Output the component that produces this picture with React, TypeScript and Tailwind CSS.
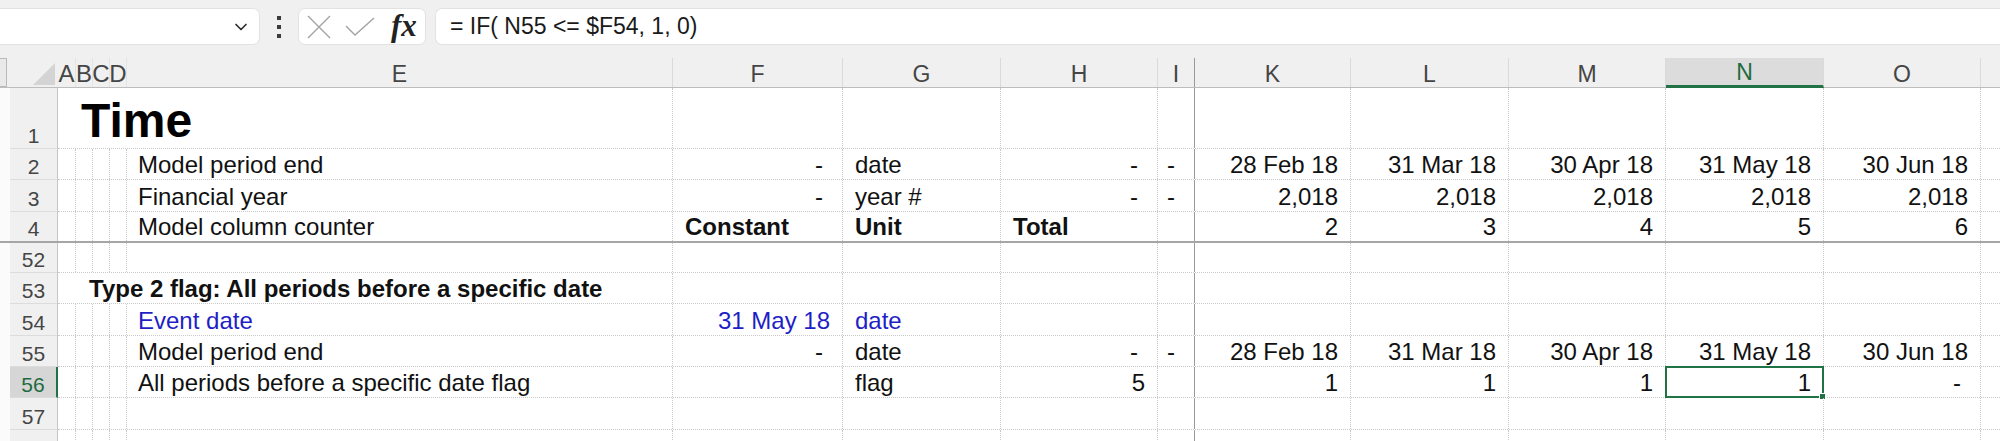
import React from 'react';
import { ChevronDown } from 'lucide-react';

type Val = { t: string; a?: 'l' | 'r' | 'd'; b?: boolean; blue?: boolean };
type RowDef = {
  n: string;
  h: string;
  title?: { t: string; big?: boolean };
  e?: Val;
  cells?: Record<string, Val>;
  frozen?: boolean;
  active?: boolean;
};

const SMALL = [
  { k: 'A', w: 'w-[18px]' },
  { k: 'B', w: 'w-[17px]' },
  { k: 'C', w: 'w-[17px]' },
  { k: 'D', w: 'w-[17px]' },
];

const COLS = [
  { k: 'F', w: 'w-[170px]' },
  { k: 'G', w: 'w-[158px]' },
  { k: 'H', w: 'w-[157px]' },
  { k: 'I', w: 'w-[37px]' },
  { k: 'K', w: 'w-[156px]' },
  { k: 'L', w: 'w-[158px]' },
  { k: 'M', w: 'w-[157px]' },
  { k: 'N', w: 'w-[158px]' },
  { k: 'O', w: 'w-[157px]' },
];

const dates = (): Record<string, Val> => ({
  K: { t: '28 Feb 18' },
  L: { t: '31 Mar 18' },
  M: { t: '30 Apr 18' },
  N: { t: '31 May 18' },
  O: { t: '30 Jun 18' },
});

const ROWS: RowDef[] = [
  { n: '1', h: 'h-[61px]', title: { t: 'Time', big: true } },
  {
    n: '2',
    h: 'h-[31px]',
    e: { t: 'Model period end' },
    cells: { F: { t: '-', a: 'd' }, G: { t: 'date', a: 'l' }, H: { t: '-', a: 'd' }, I: { t: '-', a: 'd' }, ...dates() },
  },
  {
    n: '3',
    h: 'h-[32px]',
    e: { t: 'Financial year' },
    cells: {
      F: { t: '-', a: 'd' },
      G: { t: 'year #', a: 'l' },
      H: { t: '-', a: 'd' },
      I: { t: '-', a: 'd' },
      K: { t: '2,018' },
      L: { t: '2,018' },
      M: { t: '2,018' },
      N: { t: '2,018' },
      O: { t: '2,018' },
    },
  },
  {
    n: '4',
    h: 'h-[31px]',
    frozen: true,
    e: { t: 'Model column counter' },
    cells: {
      F: { t: 'Constant', a: 'l', b: true },
      G: { t: 'Unit', a: 'l', b: true },
      H: { t: 'Total', a: 'l', b: true },
      K: { t: '2' },
      L: { t: '3' },
      M: { t: '4' },
      N: { t: '5' },
      O: { t: '6' },
    },
  },
  { n: '52', h: 'h-[30px]' },
  { n: '53', h: 'h-[31px]', title: { t: 'Type 2 flag: All periods before a specific date' } },
  {
    n: '54',
    h: 'h-[32px]',
    e: { t: 'Event date', blue: true },
    cells: { F: { t: '31 May 18', blue: true }, G: { t: 'date', a: 'l', blue: true } },
  },
  {
    n: '55',
    h: 'h-[31px]',
    e: { t: 'Model period end' },
    cells: { F: { t: '-', a: 'd' }, G: { t: 'date', a: 'l' }, H: { t: '-', a: 'd' }, I: { t: '-', a: 'd' }, ...dates() },
  },
  {
    n: '56',
    h: 'h-[31px]',
    active: true,
    e: { t: 'All periods before a specific date flag' },
    cells: {
      G: { t: 'flag', a: 'l' },
      H: { t: '5' },
      K: { t: '1' },
      L: { t: '1' },
      M: { t: '1' },
      N: { t: '1' },
      O: { t: '-', a: 'd' },
    },
  },
  { n: '57', h: 'h-[32px]' },
  { n: '58', h: 'h-[31px]' },
];

function CellText({ v }: { v?: Val }) {
  if (!v) return null;
  return (
    <span
      className={`leading-[24px] pb-[2px] whitespace-nowrap ${v.b ? 'font-bold' : ''} ${
        v.blue ? 'text-[#1f1fc6]' : 'text-[#111]'
      }`}
    >
      {v.t}
    </span>
  );
}

function alignCls(v?: Val) {
  if (!v) return '';
  if (v.a === 'l') return 'justify-start pl-[12px]';
  if (v.a === 'd') return 'justify-end pr-[19px]';
  return 'justify-end pr-[12px]';
}

function GridRow({ r }: { r: RowDef }) {
  const bottom = r.frozen ? '' : 'border-b border-dotted border-[#c9c9c9]';
  return (
    <div className={`flex ${r.h} shrink-0 ${r.frozen ? 'border-b-2 border-[#a6a6a6]' : ''}`}>
      <div className="w-[10px] shrink-0 bg-[#fbfbfb]" />
      <div
        className={`w-[48px] shrink-0 flex items-end justify-center border-r ${
          r.frozen ? '' : 'border-b border-b-[#dcdcdc]'
        } ${
          r.active
            ? 'bg-[#d6d6d6] text-[#1e6b41] border-r-2 border-r-[#217346]'
            : 'bg-[#f0f0f0] text-[#454545] border-r-[#c6c6c6]'
        }`}
      >
        <span className="text-[21px] leading-[21px] pb-[2px]">{r.n}</span>
      </div>
      <div className={`flex flex-1 min-w-0 ${bottom}`}>
        {r.title ? (
          <div className="w-[615px] shrink-0 flex items-end border-r border-dotted border-[#c9c9c9]">
            {r.title.big ? (
              <span className="text-[48px] leading-[48px] font-bold pl-[23px] pb-[3px] text-black">{r.title.t}</span>
            ) : (
              <span className="text-[24px] leading-[24px] font-bold pl-[31px] pb-[2px] text-[#111] whitespace-nowrap">
                {r.title.t}
              </span>
            )}
          </div>
        ) : (
          <>
            {SMALL.map((c) => (
              <div key={c.k} className={`${c.w} shrink-0 border-r border-dotted border-[#c9c9c9]`} />
            ))}
            <div className="w-[546px] shrink-0 flex items-end pl-[11px] border-r border-dotted border-[#c9c9c9]">
              <CellText v={r.e} />
            </div>
          </>
        )}
        {COLS.map((c) => {
          const v = r.cells?.[c.k];
          const sel = r.active && c.k === 'N';
          return (
            <div
              key={c.k}
              className={`${c.w} shrink-0 relative flex items-end border-r ${
                c.k === 'I' ? 'border-solid border-[#9b9b9b]' : 'border-dotted border-[#c9c9c9]'
              } ${alignCls(v)}`}
            >
              <CellText v={v} />
              {sel && (
                <div className="absolute -left-[1px] -top-[1px] -right-[1px] -bottom-[1px] border-2 border-[#217346]">
                  <div className="absolute -right-[4px] -bottom-[4px] w-[7px] h-[7px] bg-[#217346] border border-white" />
                </div>
              )}
            </div>
          );
        })}
        <div className="flex-1" />
      </div>
    </div>
  );
}

export default function App() {
  return (
    <div className="w-[2000px] h-[441px] overflow-hidden bg-white font-['Liberation_Sans',Arial,sans-serif] text-[24px] flex flex-col">
      {/* formula bar */}
      <div className="h-[58px] shrink-0 bg-[#f0f0f0] flex items-start pt-[8px]">
        <div className="w-[260px] h-[37px] bg-white rounded-r-[7px] border border-l-0 border-[#e2e2e2] flex items-center justify-end pr-[8px]">
          <ChevronDown size={20} strokeWidth={2} className="text-[#2b2b2b]" />
        </div>
        <div className="w-[38px] h-[37px] flex flex-col items-center justify-center gap-[5px]">
          <div className="w-[4px] h-[4px] bg-[#3a3a3a]" />
          <div className="w-[4px] h-[4px] bg-[#3a3a3a]" />
          <div className="w-[4px] h-[4px] bg-[#3a3a3a]" />
        </div>
        <div className="w-[128px] h-[37px] bg-white rounded-[7px] border border-[#e2e2e2] flex items-center pl-[8px]">
          <svg width="24" height="24" viewBox="0 0 24 24" className="shrink-0">
            <path d="M1 1 L23 23 M23 1 L1 23" stroke="#a3a3a3" strokeWidth="1.4" fill="none" />
          </svg>
          <svg width="30" height="20" viewBox="0 0 30 20" className="ml-[14px] shrink-0">
            <path d="M1 9 L10 18 L29 1" stroke="#a3a3a3" strokeWidth="1.4" fill="none" />
          </svg>
          <span className="ml-[16px] font-['Liberation_Serif',serif] italic font-bold text-[31px] leading-none text-[#222] -mt-[2px]">
            fx
          </span>
        </div>
        <div className="ml-[9px] flex-1 h-[37px] bg-white rounded-l-[7px] border border-r-0 border-[#e2e2e2] flex items-center pl-[14px]">
          <span className="text-[23px] text-[#1a1a1a] whitespace-pre">= IF( N55 &lt;= $F54, 1, 0)</span>
        </div>
      </div>

      {/* column headers */}
      <div className="h-[30px] shrink-0 flex bg-[#f0f0f0] border-b border-[#bdbdbd]">
        <div className="w-[10px] shrink-0 flex">
          <div className="w-[7px] h-full bg-[#e9e9e9] border border-l-0 border-[#b9b9b9]" />
        </div>
        <div className="w-[48px] shrink-0 relative">
          <svg className="absolute left-[23px] top-[5px]" width="22" height="22" viewBox="0 0 22 22">
            <polygon points="22,0 22,22 0,22" fill="#d4d4d4" />
          </svg>
        </div>
        {SMALL.map((c) => (
          <div
            key={c.k}
            className={`${c.w} shrink-0 flex items-end justify-center text-[24px] leading-[24px] text-[#454545] pb-[1px] border-r border-[#e4e4e4]`}
          >
            <span className="whitespace-nowrap">{c.k}</span>
          </div>
        ))}
        <div className="w-[546px] shrink-0 flex items-end justify-center border-r border-[#dadada] text-[23px] leading-[23px] text-[#454545] pb-[1px]">
          E
        </div>
        {COLS.map((c) => (
          <div
            key={c.k}
            className={`${c.w} shrink-0 flex items-end justify-center text-[23px] leading-[23px] pb-[1px] border-r ${
              c.k === 'I' ? 'border-[#9b9b9b]' : 'border-[#dadada]'
            } ${c.k === 'N' ? 'bg-[#dcdcdc] text-[#1e6b41] border-b-[3px] border-b-[#217346] -mb-[1px]' : 'text-[#454545]'}`}
          >
            {c.k}
          </div>
        ))}
        <div className="flex-1" />
      </div>

      {/* grid */}
      {ROWS.map((r) => (
        <GridRow key={r.n} r={r} />
      ))}
    </div>
  );
}
